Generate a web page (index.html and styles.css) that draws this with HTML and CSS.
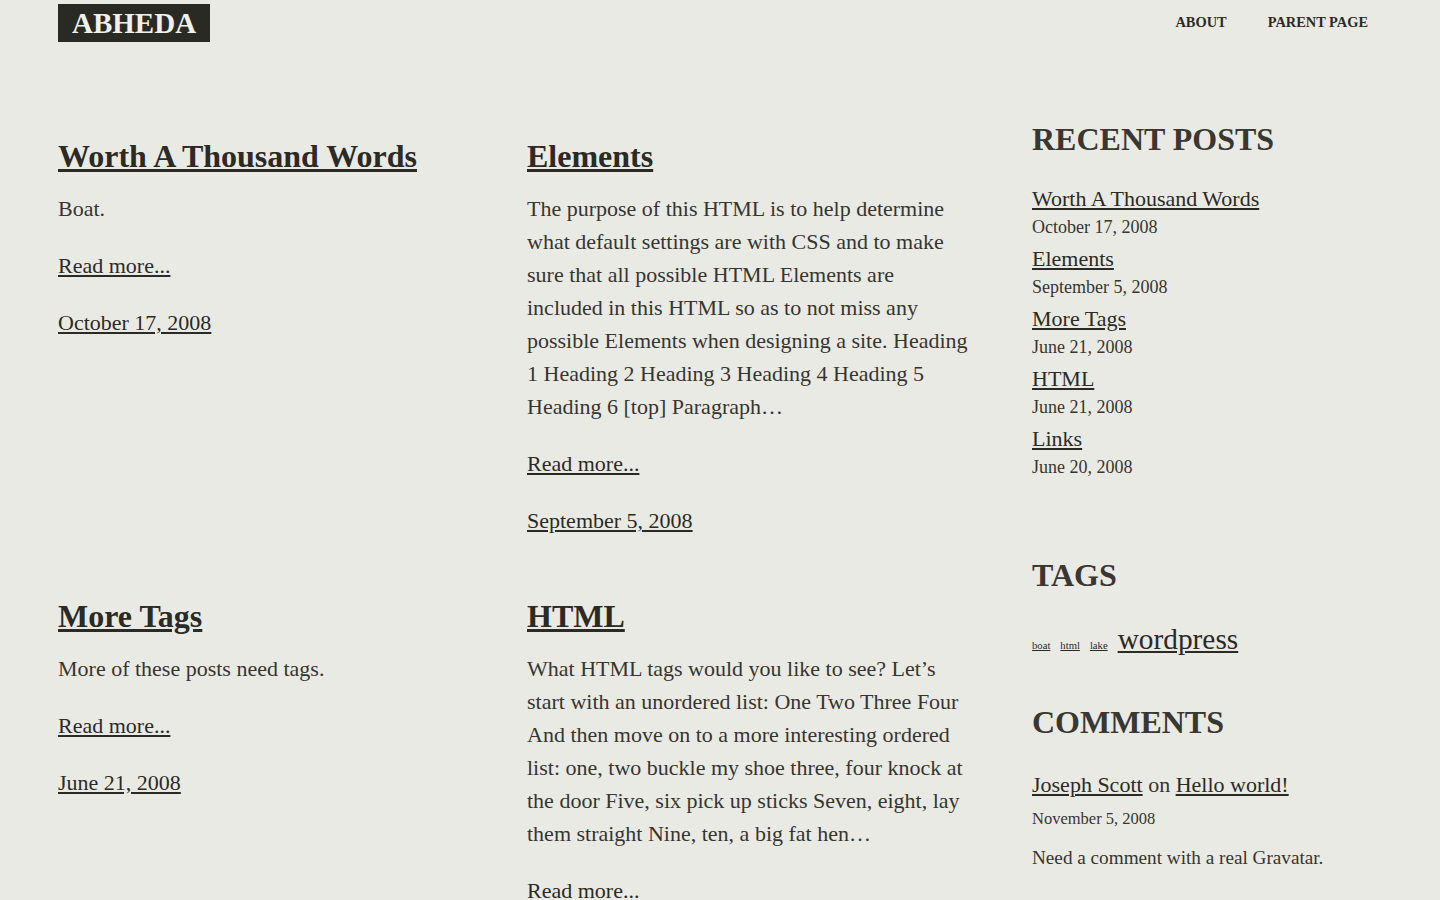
FILE: index.html
```html
<!DOCTYPE html>
<html lang="en">
<head>
<meta charset="utf-8">
<title>Abheda</title>
<link rel="stylesheet" href="styles.css">
</head>
<body>
<header class="site-header">
  <a class="logo" href="#">ABHEDA</a>
  <nav class="nav">
    <a href="#">ABOUT</a>
    <a href="#">PARENT PAGE</a>
  </nav>
</header>
<div class="main">
  <div class="posts">
    <article class="post">
      <h2 class="post-title"><a href="#">Worth A Thousand Words</a></h2>
      <p>Boat.</p>
      <p><a href="#">Read more...</a></p>
      <p><a href="#">October 17, 2008</a></p>
    </article>
    <article class="post">
      <h2 class="post-title"><a href="#">Elements</a></h2>
      <p>The purpose of this HTML is to help determine what default settings are with CSS and to make sure that all possible HTML Elements are included in this HTML so as to not miss any possible Elements when designing a site. Heading 1 Heading 2 Heading 3 Heading 4 Heading 5 Heading 6 [top] Paragraph…</p>
      <p><a href="#">Read more...</a></p>
      <p><a href="#">September 5, 2008</a></p>
    </article>
    <article class="post">
      <h2 class="post-title"><a href="#">More Tags</a></h2>
      <p>More of these posts need tags.</p>
      <p><a href="#">Read more...</a></p>
      <p><a href="#">June 21, 2008</a></p>
    </article>
    <article class="post">
      <h2 class="post-title"><a href="#">HTML</a></h2>
      <p>What HTML tags would you like to see? Let’s start with an unordered list: One Two Three Four And then move on to a more interesting ordered list: one, two buckle my shoe three, four knock at the door Five, six pick up sticks Seven, eight, lay them straight Nine, ten, a big fat hen…</p>
      <p><a href="#">Read more...</a></p>
      <p><a href="#">June 21, 2008</a></p>
    </article>
  </div>
  <aside class="sidebar">
    <section class="widget widget-recent">
      <h2 class="widget-title">RECENT POSTS</h2>
      <ul class="recent-list">
        <li><a href="#">Worth A Thousand Words</a><span class="recent-date">October 17, 2008</span></li>
        <li><a href="#">Elements</a><span class="recent-date">September 5, 2008</span></li>
        <li><a href="#">More Tags</a><span class="recent-date">June 21, 2008</span></li>
        <li><a href="#">HTML</a><span class="recent-date">June 21, 2008</span></li>
        <li><a href="#">Links</a><span class="recent-date">June 20, 2008</span></li>
      </ul>
    </section>
    <section class="widget">
      <h2 class="widget-title">TAGS</h2>
      <div class="tagcloud">
        <a class="tag-small" href="#">boat</a>
        <a class="tag-small" href="#">html</a>
        <a class="tag-small" href="#">lake</a>
        <a class="tag-large" href="#">wordpress</a>
      </div>
    </section>
    <section class="widget">
      <h2 class="widget-title">COMMENTS</h2>
      <p class="comment-head"><a href="#">Joseph Scott</a> on <a href="#">Hello world!</a></p>
      <p class="comment-date">November 5, 2008</p>
      <p class="comment-text">Need a comment with a real Gravatar.</p>
    </section>
  </aside>
</div>
</body>
</html>
```

FILE: styles.css
```css
html, body {
  margin: 0;
  padding: 0;
}

body {
  background: #eaeae5;
  color: #363530;
  font-family: "Liberation Serif", "Times New Roman", serif;
  font-size: 22px;
}

a {
  color: #2b2a26;
  text-decoration: underline;
}

.site-header {
  display: flex;
  justify-content: space-between;
  align-items: flex-start;
  padding: 4px 72px 0 58px;
}

.logo {
  display: block;
  background: #2a2a25;
  color: #f1f0ea;
  font-weight: bold;
  font-size: 29px;
  line-height: 38px;
  height: 38px;
  padding: 0 14px;
  text-decoration: none;
}

.nav {
  display: flex;
  gap: 41px;
  padding-top: 9px;
}

.nav a {
  font-size: 14.4px;
  font-weight: bold;
  text-decoration: none;
  color: #2b2a26;
  line-height: 18px;
}

.main {
  display: flex;
  align-items: flex-start;
  padding: 0 72px 0 58px;
  margin-top: 77px;
}

.posts {
  width: 974px;
  flex-shrink: 0;
  display: grid;
  grid-template-columns: 440px 448px;
  column-gap: 29px;
  row-gap: 35px;
  padding-top: 17px;
}

.post-title {
  margin: 0 0 16px;
  font-size: 32px;
  line-height: 40px;
  font-weight: bold;
}

.post p {
  margin: 0 0 24px;
  line-height: 33px;
}

.sidebar {
  width: 336px;
  flex-shrink: 0;
}

.widget {
  margin-bottom: 41px;
}

.widget-recent {
  margin-bottom: 74px;
}

.widget-title {
  margin: 0 0 26px;
  font-size: 32px;
  line-height: 40px;
  font-weight: bold;
  color: #393732;
}

.recent-list {
  list-style: none;
  margin: 0;
  padding: 0;
}

.recent-list li {
  display: flex;
  flex-direction: column;
  margin-bottom: 4px;
}

.recent-list a {
  font-size: 22px;
  line-height: 28px;
}

.recent-date {
  font-size: 18px;
  line-height: 28px;
}

.tagcloud {
  display: flex;
  align-items: baseline;
  gap: 10px;
  height: 40px;
  line-height: 36px;
}

.tag-small {
  font-size: 10.67px;
}

.tag-large {
  font-size: 29.33px;
}

.comment-head {
  margin: 0;
  line-height: 34px;
}

.comment-date {
  margin: 3px 0 0;
  font-size: 16.5px;
  line-height: 28px;
}

.comment-text {
  margin: 11px 0 0;
  font-size: 19.2px;
  line-height: 28px;
}
```
